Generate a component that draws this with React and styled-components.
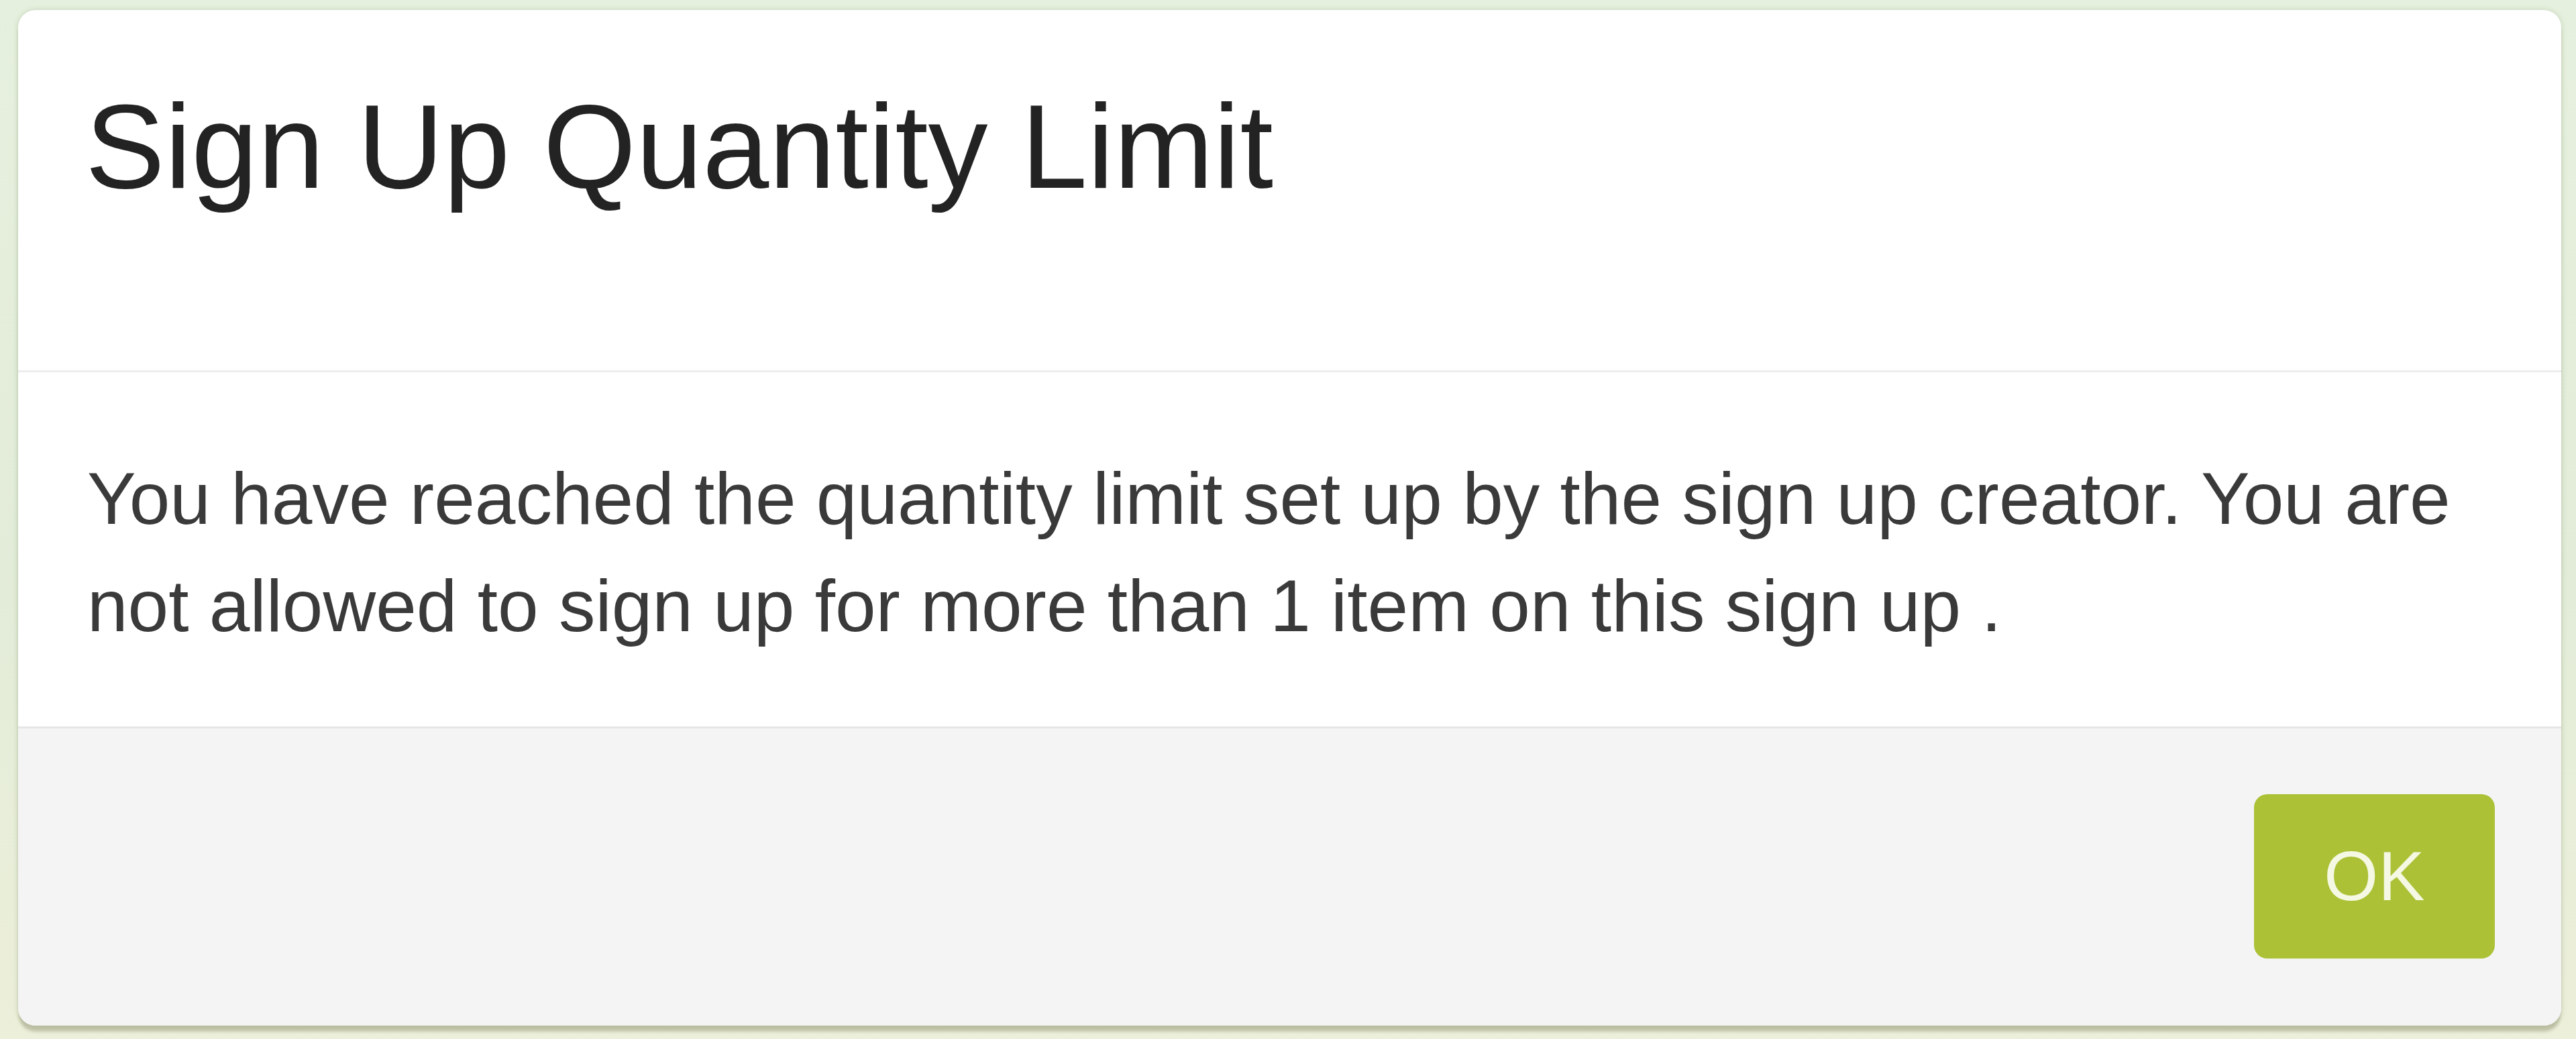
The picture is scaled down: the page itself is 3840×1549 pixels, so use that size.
import styled, { createGlobalStyle } from 'styled-components'

const GlobalStyle = createGlobalStyle`
  html, body {
    margin: 0;
    padding: 0;
    background: #e4eedb;
  }
  body {
    font-family: 'Liberation Sans', Arial, Helvetica, sans-serif;
  }
`

const Backdrop = styled.div`
  min-height: 1549px;
  box-sizing: border-box;
  padding: 15px 22px 0 27px;
  background: linear-gradient(180deg, #e6f0de 0%, #e2ecd8 55%, #ecefd9 100%);
`

const Modal = styled.div`
  background: #ffffff;
  border-radius: 26px;
  overflow: hidden;
  box-shadow: 0 10px 4px -1px rgba(110, 110, 70, 0.32), 0 0 8px rgba(70, 100, 50, 0.2);
`

const Header = styled.div`
  padding: 106px 100px 236px;
  border-bottom: 3px solid #ededed;
`

const Title = styled.h4`
  margin: 0;
  font-size: 178px;
  line-height: 195px;
  font-weight: 400;
  color: #232323;
`

const Body = styled.div`
  padding: 108px 100px 100px 103px;
  font-size: 109px;
  line-height: 160px;
  color: #3a3a3a;
`

const Footer = styled.div`
  display: flex;
  justify-content: flex-end;
  padding: 98px 99px 100px;
  background: #f4f4f4;
  border-top: 3px solid #e6e6e6;
`

const Button = styled.button`
  width: 359px;
  height: 245px;
  border: none;
  border-radius: 20px;
  background: #acc136;
  color: #f5f8e2;
  font-family: 'Liberation Sans', Arial, sans-serif;
  font-size: 104px;
  font-weight: 400;
  cursor: pointer;
`

const App = () => {
  return (
    <>
      <GlobalStyle />
      <Backdrop>
        <Modal>
          <Header>
            <Title>Sign Up Quantity Limit</Title>
          </Header>
          <Body>
            You have reached the quantity limit set up by the sign up creator. You are
            not allowed to sign up for more than 1 item on this sign up .
          </Body>
          <Footer>
            <Button>OK</Button>
          </Footer>
        </Modal>
      </Backdrop>
    </>
  )
}

export default App
